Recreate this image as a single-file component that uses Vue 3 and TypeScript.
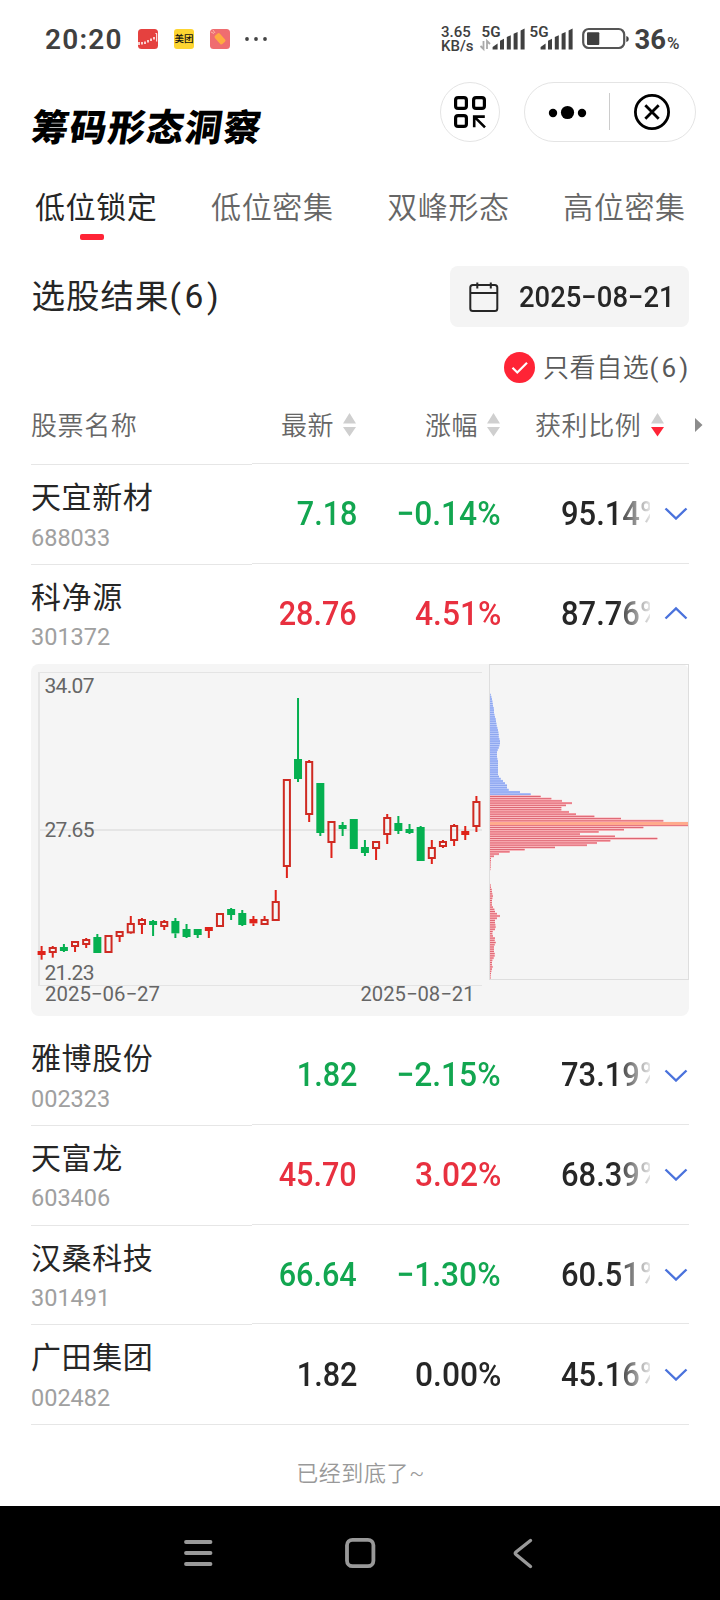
<script setup lang="ts">
interface Stock {
  name: string
  code: string
  price: string
  change: string
  ratio: string
  trend: 'up' | 'down' | 'flat'
  open?: boolean
}

type Candle = [kind: 'r' | 'g' | 'f', high: number, top: number, bottom: number, low: number]

const tabs = ['低位锁定', '低位密集', '双峰形态', '高位密集']

const stocks: Stock[] = [
  { name: '天宜新材', code: '688033', price: '7.18', change: '−0.14%', ratio: '95.14%', trend: 'down' },
  { name: '科净源', code: '301372', price: '28.76', change: '4.51%', ratio: '87.76%', trend: 'up', open: true },
  { name: '雅博股份', code: '002323', price: '1.82', change: '−2.15%', ratio: '73.19%', trend: 'down' },
  { name: '天富龙', code: '603406', price: '45.70', change: '3.02%', ratio: '68.39%', trend: 'up' },
  { name: '汉桑科技', code: '301491', price: '66.64', change: '−1.30%', ratio: '60.51%', trend: 'down' },
  { name: '广田集团', code: '002482', price: '1.82', change: '0.00%', ratio: '45.16%', trend: 'flat' },
]

// r: hollow rising, g: falling, f: solid rising; vertical units are thirds of a pixel
const raw: Candle[] = [
  ['f', 888, 903, 915, 929], ['r', 888, 891, 909, 923], ['g', 882, 891, 903, 906], ['r', 873, 873, 891, 906],
  ['r', 864, 867, 885, 894], ['g', 852, 861, 909, 909], ['r', 855, 855, 909, 909], ['r', 843, 843, 861, 876],
  ['r', 798, 819, 850, 852], ['r', 804, 807, 825, 852], ['g', 810, 813, 825, 858], ['r', 810, 813, 831, 840],
  ['g', 804, 813, 850, 864], ['g', 822, 837, 861, 864], ['g', 837, 837, 855, 864], ['f', 831, 831, 843, 864],
  ['r', 789, 789, 831, 831], ['g', 774, 777, 795, 810], ['g', 780, 789, 825, 828], ['f', 798, 807, 820, 828],
  ['r', 798, 807, 825, 825], ['r', 720, 753, 813, 813], ['r', 387, 387, 651, 684], ['g', 144, 327, 387, 396],
  ['r', 330, 333, 495, 516], ['g', 399, 399, 549, 558], ['r', 513, 513, 579, 624], ['g', 516, 525, 537, 558],
  ['g', 507, 507, 597, 597], ['g', 570, 591, 609, 618], ['r', 573, 573, 597, 630], ['r', 492, 501, 555, 582],
  ['g', 498, 519, 543, 552], ['g', 522, 537, 549, 552], ['g', 528, 531, 633, 633], ['r', 570, 591, 627, 642],
  ['r', 570, 573, 591, 594], ['r', 522, 525, 573, 588], ['f', 528, 543, 555, 570], ['r', 438, 453, 531, 546],
]

const candles = raw.map(([kind, high, top, bottom, low], i) => ({
  kind,
  x: 10.6 + i * 11.149,
  high: high / 3 - 14,
  top: top / 3 - 14,
  bottom: bottom / 3 - 14,
  low: low / 3 - 14,
}))

const upper = [
  2, 4, 6, 7, 8, 9, 11, 12, 12, 13, 15, 17, 18, 19, 20, 22, 24, 25, 26, 26, 28, 30, 30, 28, 26, 23, 21, 21, 21, 22,
  24, 24, 24, 24, 24, 24, 24, 27, 32, 39, 45, 51, 51, 56, 90, 122,
]
const middle = [
  152, 184, 216, 246, 228, 214, 214, 237, 258, 313, 393, 520, 594, 594, 460, 402, 326, 270, 375, 502, 361, 321, 291,
  195, 104, 59, 27, 12, 3, 3, 2, 2, 2, 1,
]
const lower = [
  2, 3, 5, 6, 7, 9, 7, 6, 6, 6, 9, 13, 15, 21, 30, 21, 15, 15, 16, 17, 15, 8, 7, 9, 15, 14, 17, 14, 12, 12, 12, 14,
  14, 11, 7, 6, 6, 8, 6, 4, 3, 2, 2,
]

const place = (values: number[], start: number) =>
  values.map((v, i) => ({ y: (start + i * 6.64) / 3 - 14, w: v / 3 }))

const blueBars = place(upper, 134)
const redBars = [...place(middle, 439.4), ...place(lower, 705)]
</script>

<template>
  <div class="page">
    <header class="status">
      <span class="clock">20:20</span>
      <div class="apps">
        <svg width="20" height="20" viewBox="0 0 20 20">
          <rect width="20" height="20" rx="3.5" fill="#e5413f" />
          <path d="M1 13v3M4 13v2.500M7 12.500v2.500M10 11v2.500M13 9.500v2.500M16 8v2.500" stroke="#fff" stroke-width="1.500" />
          <path d="M17.500 4.500h1.200v8" stroke="#fff" stroke-width="1" fill="none" />
        </svg>
        <span class="meituan">美团</span>
        <svg width="20" height="20" viewBox="0 0 20 20">
          <rect width="20" height="20" rx="3.500" fill="#ef6d70" />
          <rect x="4.500" y="6.500" width="11" height="6.500" rx="1.500" transform="rotate(48 10 9.750)" fill="#ffab40" />
          <path d="M1 3l3 1.500M3 1l2 3" stroke="#ffc9b0" stroke-width=".8" />
        </svg>
      </div>
      <svg class="more" width="24" height="6" viewBox="0 0 24 6">
        <g fill="#444"><circle cx="3" cy="3" r="1.900" /><circle cx="12" cy="3" r="1.900" /><circle cx="21" cy="3" r="1.900" /></g>
      </svg>
      <div class="speed"><span>3.65</span><span>KB/s</span></div>
      <svg class="signals" width="206" height="40" viewBox="478 19 206 40">
        <g fill="#404040">
          <text x="481.500" y="37.300" class="five" textLength="19" lengthAdjust="spacingAndGlyphs">5G</text>
          <text x="529.500" y="37.300" class="five" textLength="19" lengthAdjust="spacingAndGlyphs">5G</text>
          <g v-for="dx in [0, 48]" :key="dx" :transform="`translate(${dx} 0)`">
            <path d="M492.600 49.500v-2.500l5-3.500v6zM500 49.500v-8.800l4-2v10.800zM506.800 49.500v-12.500l4-1.800v14.300zM513.600 49.500v-15.700l4-1.800v17.500zM520.600 49.500v-19l4-2v21z" />
          </g>
          <rect x="587" y="32.300" width="12.300" height="12.700" rx="1" />
          <path d="M626.300 36q2.500.5 2.500 3t-2.500 3z" />
          <text x="634.500" y="49.300" class="pct" textLength="31.500" lengthAdjust="spacingAndGlyphs">36</text>
          <text x="667" y="48.600" class="sign" textLength="12.500" lengthAdjust="spacingAndGlyphs">%</text>
        </g>
        <rect x="583.200" y="29" width="41" height="19" rx="5.500" fill="none" stroke="#555" stroke-width="2.200" />
        <path d="M483.500 41v8l-3-3M487 49v-8l3 3" fill="none" stroke="#aaa" stroke-width="1.800" />
      </svg>
    </header>

    <div class="titlebar">
      <h1>筹码形态洞察</h1>
      <svg class="scan" width="60" height="60" viewBox="0 0 60 60">
        <circle cx="30" cy="30" r="29.500" fill="#fff" stroke="#e4e4e4" />
        <g fill="none" stroke="#000" stroke-width="3.200">
          <rect x="15.600" y="15.600" width="10.800" height="10.800" rx="2.500" />
          <rect x="33.600" y="15.600" width="10.800" height="10.800" rx="2.500" />
          <rect x="15.600" y="33.600" width="10.800" height="10.800" rx="2.500" />
          <path d="M34.200 45.300V34.600H44.800M35 35.300L45 45.300" stroke-width="2.600" />
        </g>
      </svg>
      <svg class="capsule" width="172" height="60" viewBox="0 0 172 60">
        <rect x=".5" y=".5" width="171" height="59" rx="29.500" fill="#fff" stroke="#e4e4e4" />
        <circle cx="29" cy="31" r="4.200" /><circle cx="43.500" cy="30.500" r="6.600" /><circle cx="58" cy="31" r="4.200" />
        <path d="M85.500 11v37" stroke="#ccc" />
        <g fill="none" stroke="#000">
          <circle cx="128" cy="30" r="16.600" stroke-width="2.800" />
          <path d="M121.300 23.300l13.400 13.400M134.700 23.300l-13.400 13.400" stroke-width="2.800" />
        </g>
      </svg>
    </div>

    <nav class="tabs">
      <div v-for="(t, i) in tabs" :key="t" class="tab" :class="{ active: i === 0 }">{{ t }}</div>
    </nav>

    <section class="summary">
      <h2>选股结果<span class="count">(6)</span></h2>
      <div class="date">
        <svg width="30" height="32" viewBox="0 0 30 32">
          <g fill="none" stroke="#262626" stroke-width="2">
            <rect x="1.300" y="4" width="27" height="26" rx="2.500" />
            <path d="M1.300 12H28.300M8.300 1.500v6M21.800 1.500v6" />
          </g>
        </svg>
        <span class="date-text">2025−08−21</span>
      </div>
    </section>

    <div class="filter">
      <svg width="31" height="31" viewBox="0 0 31 31">
        <circle cx="15.500" cy="15.500" r="15.500" fill="#ff2436" />
        <path d="M8.500 15.800l4.800 4.700 9.700-9.700" fill="none" stroke="#fff" stroke-width="2.200" />
      </svg>
      <span class="filter-text">只看自选<span class="count">(6)</span></span>
    </div>

    <div class="thead">
      <span class="c0">股票名称</span>
      <span class="c1">最新</span>
      <svg class="sort" width="13" height="24" viewBox="0 0 13 24"><path d="M0 10.500L6.500 0 13 10.500zM0 14L6.500 23.500 13 14z" fill="#cfcfcf" /></svg>
      <span class="c2">涨幅</span>
      <svg class="sort" width="13" height="24" viewBox="0 0 13 24"><path d="M0 10.500L6.500 0 13 10.500zM0 14L6.500 23.500 13 14z" fill="#cfcfcf" /></svg>
      <span class="c3">获利比例</span>
      <svg class="sort" width="13" height="24" viewBox="0 0 13 24">
        <path d="M0 10.500L6.500 0 13 10.500z" fill="#cfcfcf" /><path d="M0 14L6.500 23.500 13 14z" fill="#ff2436" />
      </svg>
      <svg class="next" width="8" height="14" viewBox="0 0 8 14"><path d="M0 0L7.500 7 0 14z" fill="#8c8c8c" /></svg>
    </div>

    <main class="list">
      <template v-for="(s, i) in stocks" :key="s.code">
        <div class="row" :class="[s.trend, { open: s.open, last: i === stocks.length - 1 }]">
          <div class="name">
            <strong>{{ s.name }}</strong>
            <small>{{ s.code }}</small>
          </div>
          <div class="values">
            <div class="cell price"><span>{{ s.price }}</span></div>
            <div class="cell change"><span>{{ s.change }}</span></div>
            <div class="cell ratio"><span>{{ s.ratio }}</span></div>
            <svg class="chev" width="24" height="14" viewBox="0 0 24 14">
              <path :d="s.open ? 'M1.500 12.500L12 2.500 22.500 12.500' : 'M1.500 2.500L12 12.500 22.500 2.500'" fill="none" stroke="#4a72dc" stroke-width="2.400" />
            </svg>
          </div>
        </div>
        <svg v-if="s.open" class="chart" width="658" height="352" viewBox="0 0 658 352">
          <rect width="658" height="352" rx="8" fill="#f5f5f5" />
          <path d="M7 8.500H451M7 321.500H451" stroke="#e4e4e4" />
          <path d="M7 166H451M8 8V322" stroke="#e5e5e5" stroke-width="2" />
          <g class="axis">
            <text x="13.500" y="29" textLength="50">34.07</text>
            <text x="13.500" y="173" textLength="50">27.65</text>
            <text x="13.500" y="316" textLength="50">21.23</text>
            <text x="14" y="337" textLength="115" lengthAdjust="spacingAndGlyphs">2025−06−27</text>
            <text x="329.500" y="337" textLength="114" lengthAdjust="spacingAndGlyphs">2025−08−21</text>
          </g>
          <g v-for="(c, k) in candles" :key="k" :class="c.kind">
            <rect :x="c.x - 1" :y="c.high" width="2" :height="c.top - c.high" class="wick" />
            <rect :x="c.x - 1" :y="c.bottom" width="2" :height="c.low - c.bottom" class="wick" />
            <rect v-if="c.kind === 'r'" :x="c.x - 3.050" :y="c.top + 1" width="6.100" :height="c.bottom - c.top - 2" class="hollow" />
            <rect v-else :x="c.x - 4" :y="c.top" width="8" :height="c.bottom - c.top" class="wick" />
          </g>
          <rect x="458.500" y=".5" width="199" height="315" fill="none" stroke="#dedede" />
          <g v-for="(b, k) in blueBars" :key="'b' + k">
            <rect x="459" :y="b.y - 1.100" :width="b.w" height="2.250" fill="#a9bdfb" />
            <rect x="459" :y="b.y - 0.500" :width="b.w" height="1" fill="#8da6ee" />
          </g>
          <g v-for="(b, k) in redBars" :key="'r' + k">
            <rect x="459" :y="b.y - 1.100" :width="b.w" height="2.250" fill="#fdb0b5" />
            <rect x="459" :y="b.y - 0.500" :width="b.w" height="1" fill="#dc6472" />
          </g>
          <rect x="459" y="158" width="198" height="3" fill="#ffab8d" />
        </svg>
      </template>
    </main>

    <p class="end">已经到底了~</p>

    <footer class="navbar">
      <svg width="720" height="94" viewBox="0 0 720 94">
        <g fill="none" stroke="#999" stroke-width="3.800">
          <path d="M186 36H210.500M186 47H210.500M186 58H210.500" stroke-linecap="round" />
          <rect x="347" y="33.800" width="26.400" height="26.400" rx="5.500" />
          <path d="M530.500 34.500L516 46Q514.500 47.200 516 48.500L530.500 60.500" stroke-width="3.400" stroke-linecap="round" />
        </g>
      </svg>
    </footer>
  </div>
</template>

<style>
body {
  background: #fff;
}
</style>

<style scoped>
.page {
  width: 720px;
  height: 1600px;
  overflow: hidden;
  display: flex;
  flex-direction: column;
  background: #fff;
  color: #262626;
  font-family: Roboto, 'Noto Sans CJK SC', sans-serif;
}
h1, h2, p { margin: 0; font-weight: 400; }

.status {
  height: 78px;
  flex: none;
  display: flex;
  align-items: center;
  padding-left: 45px;
  color: #404040;
}
.clock { width: 93px; font-size: 28px; font-weight: 600; letter-spacing: 1.2px; }
.apps { display: flex; gap: 16px; width: 92px; flex: none; }
.meituan {
  width: 20px;
  height: 20px;
  border-radius: 3px;
  background: #fdd531;
  color: #111;
  font-size: 9.5px;
  line-height: 20px;
  text-align: center;
  font-weight: 500;
  white-space: nowrap;
}
.more { margin-left: 14px; }
.speed {
  margin-left: 173px;
  width: 37px;
  display: flex;
  flex-direction: column;
  font-size: 15px;
  line-height: 14.5px;
  font-weight: 500;
}
.signals { flex: none; }
.five { font: 600 14.5px Roboto, sans-serif; }
.pct { font: 700 28px Roboto, sans-serif; }
.sign { font: 500 16px Roboto, sans-serif; }

.titlebar { height: 84px; flex: none; box-sizing: border-box; display: flex; align-items: flex-start; padding: 4px 24px 0 33px; }
h1 {
  flex: 1;
  padding-top: 20px;
  font-size: 37px;
  line-height: 54px;
  font-weight: 900;
  letter-spacing: 1.4px;
  color: #000;
  white-space: nowrap;
  transform: skewX(-8deg);
}
.capsule { margin-left: 24px; }

.tabs { height: 92px; flex: none; display: flex; gap: 54.3px; padding-left: 35px; }
.tab {
  width: 121.8px;
  height: 82px;
  padding-top: 26px;
  box-sizing: border-box;
  font-size: 30px;
  line-height: 40px;
  letter-spacing: 0.6px;
  white-space: nowrap;
  color: #666;
  font-weight: 350;
}
.tab.active { color: #262626; font-weight: 400; }
.tab.active::after {
  content: '';
  display: block;
  width: 24px;
  height: 6px;
  border-radius: 2px;
  margin: 6px 0 0 45px;
  background: #ff2436;
}

.summary { height: 74px; flex: none; display: flex; justify-content: space-between; padding: 12px 31px 0 31.5px; box-sizing: border-box; }
h2 { font-size: 33.5px; line-height: 62px; letter-spacing: 1px; }
h2 .count { letter-spacing: 3.6px; }
.filter .count { letter-spacing: 3.2px; font-weight: 400; }
.date {
  width: 239px;
  height: 61px;
  border-radius: 8px;
  background: #f4f4f4;
  display: flex;
  align-items: center;
  padding-left: 19px;
  box-sizing: border-box;
}
.date-text {
  margin-left: 20px;
  font-size: 29.5px;
  font-weight: 500;
  white-space: nowrap;
  transform: scaleX(0.93);
  transform-origin: left;
}

.filter { height: 78px; flex: none; display: flex; align-items: center; gap: 8px; padding-left: 504px; box-sizing: border-box; font-size: 26px; letter-spacing: 0.6px; font-weight: 350; color: #595959; white-space: nowrap; }
.filter-text { margin-top: -3px; }

.thead {
  height: 58px;
  flex: none;
  display: flex;
  align-items: flex-start;
  padding-left: 31px;
  font-size: 26px;
  line-height: 40px;
  letter-spacing: 0.6px;
  font-weight: 350;
  color: #666;
  white-space: nowrap;
}
.thead svg { margin-top: 7px; }
.c0 { width: 250px; }
.c1 { width: 62px; }
.c2 { width: 62px; margin-left: 69px; }
.c3 { width: 116px; margin-left: 35px; }
.thead .next { margin: 12px 0 0 31px; }

.list { padding: 0 31px; }
.row { display: flex; height: 99.75px; }
.list > .row:first-child { height: 100.75px; }
.name {
  width: 221px;
  box-sizing: border-box;
  padding-top: 13px;
  border-bottom: 1px solid #e6e6e6;
  display: flex;
  flex-direction: column;
}
.values {
  flex: 1;
  display: flex;
  align-items: center;
  box-sizing: border-box;
  margin: -1px 0 1px;
  border-bottom: 1px solid #e6e6e6;
}
.list > .row:first-child .name { border-top: 1px solid #e6e6e6; }
.list > .row:first-child .values { border-top: 1px solid #e6e6e6; }
.row.open .name, .row.open .values { border-bottom-color: transparent; }
.row.last { height: 99.2px; }
.row.last .values { margin-bottom: 0; }
strong { font-size: 30px; line-height: 40px; letter-spacing: 0.6px; font-weight: 400; }
small { font-size: 23.5px; line-height: 32px; margin-top: 3.5px; font-weight: 400; color: #a0a0a0; }
.cell { font-size: 34px; line-height: 40px; font-weight: 500; white-space: nowrap; margin-top: -1px; }
.cell span { display: inline-block; transform: scaleX(0.9); transform-origin: right; }
.change span { transform: scaleX(0.935); }
.price { width: 105px; text-align: right; }
.change { width: 144px; text-align: right; }
.up .price, .up .change { color: #e8303f; }
.down .price, .down .change { color: #12a650; }
.ratio {
  margin-left: 60px;
  width: 89px;
  overflow: hidden;
  -webkit-mask-image: linear-gradient(to right, #000 62%, rgba(0, 0, 0, 0.12) 100%);
  mask-image: linear-gradient(to right, #000 62%, rgba(0, 0, 0, 0.12) 100%);
}
.ratio span { transform: scaleX(0.91); transform-origin: left; }
.chev { margin-left: 13.500px; }

.chart { display: block; margin-top: -0.5px; margin-bottom: 10.2px; }
.axis { font: 400 21px Roboto, sans-serif; fill: #666; }
.r .wick, .f .wick { fill: #df2219; }
.g .wick { fill: #05b050; }
.hollow { fill: none; stroke: #cf2a22; stroke-width: 2; }

.end { flex: 1; padding: 31px 0 0 1px; font-size: 22px; line-height: 36px; letter-spacing: 0.6px; font-weight: 350; text-align: center; color: #999; }
.navbar { height: 94px; flex: none; background: #000; }
.navbar svg { display: block; }
</style>
